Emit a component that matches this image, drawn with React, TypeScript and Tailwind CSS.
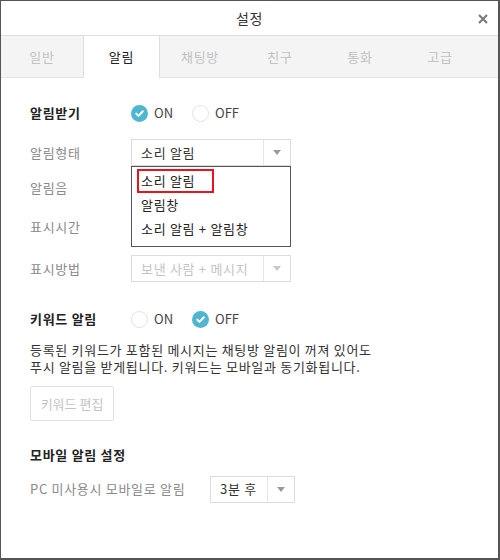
import React from 'react';

const FONT = '"Noto Sans CJK KR", "Noto Sans", "Liberation Sans", sans-serif';

const tabs = ['일반', '알림', '채팅방', '친구', '통화', '고급'];

const Radio: React.FC<{ checked: boolean; label: string }> = ({ checked, label }) => (
  <div className="flex items-center gap-[6px]">
    {checked ? (
      <span className="flex h-[17px] w-[17px] items-center justify-center rounded-full bg-[#4fb6cf]">
        <svg width="11" height="11" viewBox="0 0 12 12">
          <path d="M2.5 6.2 L5 8.6 L9.6 3.6" fill="none" stroke="#fff" strokeWidth="2.2" strokeLinecap="round" strokeLinejoin="round" />
        </svg>
      </span>
    ) : (
      <span className="h-[17px] w-[17px] rounded-full border border-[#e2e2e2] bg-white" />
    )}
    <span className="text-[13px] tracking-normal text-[#444]">{label}</span>
  </div>
);

const Caret: React.FC<{ light?: boolean }> = ({ light }) => (
  <svg width="8" height="5" viewBox="0 0 8 5">
    <path d="M0 0 L8 0 L4 5 Z" fill={light ? '#c8c8c8' : '#9a9a9a'} />
  </svg>
);

const Select: React.FC<{ value: string; width: string; disabled?: boolean }> = ({ value, width, disabled }) => (
  <div className={`flex h-[27px] items-stretch border border-[#dcdcdc] bg-white ${width}`}>
    <div className={`flex flex-1 items-center pl-[9px] text-[13px] ${disabled ? 'text-[#c4c4c4]' : 'text-[#333]'}`}>{value}</div>
    <div className="flex w-[27px] items-center justify-center border-l border-[#e6e6e6]">
      <Caret light={disabled} />
    </div>
  </div>
);

const Label: React.FC<{ children: React.ReactNode }> = ({ children }) => (
  <div className="w-[101px] shrink-0 text-[13px] text-[#8a8a8a]">{children}</div>
);

export default function App() {
  return (
    <div
      className="flex h-[560px] w-[500px] flex-col border-l border-r-2 border-b-2 border-t border-[#555] bg-white tracking-[0.7px]"
      style={{ fontFamily: FONT }}
    >
      <div className="relative flex h-[35px] shrink-0 items-center justify-center border-b border-[#dedede]">
        <span className="text-[14px] text-[#333]">설정</span>
        <svg className="absolute right-[10px] top-[13px]" width="10" height="10" viewBox="0 0 10 10">
          <path d="M1 1 L9 9 M9 1 L1 9" stroke="#777" strokeWidth="2" />
        </svg>
      </div>
      <div className="flex h-[42px] shrink-0 border-b border-[#e4e4e4] bg-[#f4f4f4]">
        {tabs.map((t, i) => (
          <div
            key={t}
            className={`flex items-center justify-center text-[13px] ${
              i === 1
                ? 'mb-[-1px] w-[77px] border-x border-[#dedede] bg-white text-[#222]'
                : i === 0
                ? 'w-[82px] text-[#c2c2c2]'
                : 'w-[80px] text-[#c2c2c2]'
            }`}
          >
            {t}
          </div>
        ))}
      </div>

      <div className="flex flex-col px-[29px] pt-[24px]">
        <div className="flex h-[22px] items-center">
          <div className="w-[101px] text-[13px] font-bold text-[#222]">알림받기</div>
          <div className="flex items-center gap-[19px]">
            <Radio checked label="ON" />
            <Radio checked={false} label="OFF" />
          </div>
        </div>

        <div className="mt-[15px] flex items-start">
          <div className="flex w-[101px] shrink-0 flex-col text-[13px] text-[#8a8a8a]">
            <div className="flex h-[27px] items-center">알림형태</div>
            <div className="mt-[11px] flex h-[22px] items-center">알림음</div>
            <div className="mt-[17px] flex h-[22px] items-center">표시시간</div>
          </div>
          <div className="flex flex-col">
            <Select value="소리 알림" width="w-[160px]" />
            <div className="flex w-[160px] flex-col border border-[#555] bg-white pb-[5px] pt-[2px] text-[13px] text-[#222]">
              <div className="ml-[5px] mr-[76px] flex h-[24px] items-center border-2 border-[#e8141c] pl-[2px]">소리 알림</div>
              <div className="flex h-[24px] items-center pl-[9px]">알림창</div>
              <div className="flex h-[24px] items-center pl-[9px]">소리 알림 + 알림창</div>
            </div>
          </div>
        </div>

        <div className="mt-[8px] flex items-center">
          <Label>표시방법</Label>
          <Select value="보낸 사람 + 메시지" width="w-[160px]" disabled />
        </div>

        <div className="mt-[26px] flex h-[22px] items-center">
          <div className="w-[101px] text-[13px] font-bold text-[#222]">키워드 알림</div>
          <div className="flex items-center gap-[19px]">
            <Radio checked={false} label="ON" />
            <Radio checked label="OFF" />
          </div>
        </div>

        <div className="mt-[11px] text-[13px] leading-[17px] text-[#333]">
          <div>등록된 키워드가 포함된 메시지는 채팅방 알림이 꺼져 있어도</div>
          <div>푸시 알림을 받게됩니다. 키워드는 모바일과 동기화됩니다.</div>
        </div>

        <div className="mt-[11px] flex h-[35px] w-[84px] items-center justify-center rounded-[2px] border border-[#e2e2e2] text-[13px] tracking-normal text-[#c4c4c4]">
          키워드 편집
        </div>

        <div className="mt-[24px] text-[13px] font-bold text-[#222]">모바일 알림 설정</div>

        <div className="mt-[11px] flex items-center">
          <div className="w-[180px] shrink-0 text-[13px] text-[#8a8a8a]">PC 미사용시 모바일로 알림</div>
          <Select value="3분 후" width="w-[85px]" />
        </div>
      </div>
    </div>
  );
}
